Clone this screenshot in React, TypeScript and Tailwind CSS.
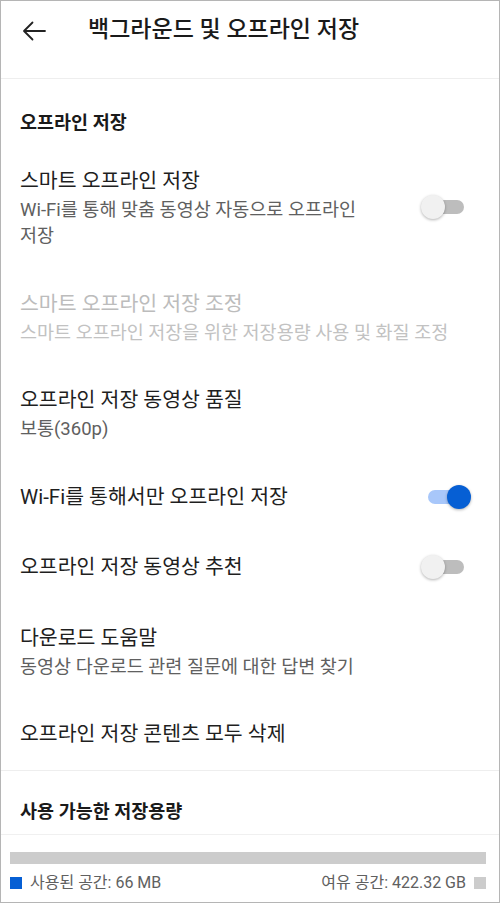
import React from 'react';

const font = { fontFamily: '"Roboto", "Noto Sans CJK KR", sans-serif' };

const Toggle = ({ on }: { on: boolean }) => (
  <div className="relative w-[50px] h-[24px] shrink-0">
    <div
      className={`absolute left-[7px] right-[7px] top-[5px] h-[14px] rounded-full ${
        on ? 'bg-[#a8c7fa]' : 'bg-[#bdbdbd]'
      }`}
    />
    <div
      className={`absolute top-0 w-[24px] h-[24px] rounded-full shadow-[0_1px_3px_rgba(0,0,0,0.3)] ${
        on ? 'right-0 bg-[#065fd4]' : 'left-0 bg-[#f1f1f1]'
      }`}
    />
  </div>
);

interface RowProps {
  title: string;
  subtitle?: string;
  disabled?: boolean;
  toggle?: boolean;
}

const Row = ({ title, subtitle, disabled, toggle }: RowProps) => (
  <div className="flex items-center gap-10 pl-[19px] pr-[28px] py-[19.25px]">
    <div className="flex-1 min-w-0 break-keep">
      <div
        className={`text-[20.5px] leading-[32px] ${disabled ? 'text-[#bcbcbc]' : 'text-[#1f1f1f]'}`}
      >
        {title}
      </div>
      {subtitle && (
        <div
          className={`text-[18.5px] leading-[26px] ${disabled ? 'text-[#c2c2c2]' : 'text-[#606060]'}`}
        >
          {subtitle}
        </div>
      )}
    </div>
    {toggle !== undefined && <Toggle on={toggle} />}
  </div>
);

export default function App() {
  return (
    <div
      className="w-[500px] h-[903px] box-border border border-[#b5b5b5] bg-white overflow-hidden"
      style={font}
    >
      <div className="h-[78px] border-b border-[#eeeeee]">
        <div className="h-[59px] flex items-center">
          <div className="w-[87px] pl-[21px] flex items-center">
            <svg width="24" height="20" viewBox="0 0 24 20" fill="none">
              <path
                d="M23 10H2.5M10.5 1.5 2 10l8.5 8.5"
                stroke="#222"
                strokeWidth="1.8"
                strokeLinecap="round"
                strokeLinejoin="round"
              />
            </svg>
          </div>
          <div className="text-[23px] font-medium text-[#1a1a1a]">백그라운드 및 오프라인 저장</div>
        </div>
      </div>

      <div className="pl-[19px] pt-[32px] pb-[11px] text-[18.5px] leading-[24px] font-bold text-[#1a1a1a]">
        오프라인 저장
      </div>

      <Row title="스마트 오프라인 저장" subtitle="Wi-Fi를 통해 맞춤 동영상 자동으로 오프라인 저장" toggle={false} />
      <Row
        title="스마트 오프라인 저장 조정"
        subtitle="스마트 오프라인 저장을 위한 저장용량 사용 및 화질 조정"
        disabled
      />
      <Row title="오프라인 저장 동영상 품질" subtitle="보통(360p)" />
      <Row title="Wi-Fi를 통해서만 오프라인 저장" toggle={true} />
      <Row title="오프라인 저장 동영상 추천" toggle={false} />
      <Row title="다운로드 도움말" subtitle="동영상 다운로드 관련 질문에 대한 답변 찾기" />
      <Row title="오프라인 저장 콘텐츠 모두 삭제" />

      <div className="border-t border-[#eeeeee]">
        <div className="pl-[19px] pt-[29px] pb-[10px] text-[18.5px] leading-[24px] font-bold text-[#1a1a1a] border-b border-[#f0f0f0]">
          사용 가능한 저장용량
        </div>
        <div className="pl-[9px] pr-[13px] pt-[17px]">
          <div className="h-[12px] bg-[#cccccc]">
            <div className="h-full bg-[#065fd4]" style={{ width: `${(66 / (422.32 * 1024)) * 100}%` }} />
          </div>
          <div className="mt-[9px] flex items-center justify-between text-[16px] leading-[20px] text-[#606060]">
            <div className="flex items-center gap-2">
              <span className="w-[12px] h-[12px] bg-[#065fd4]" />
              <span>사용된 공간: 66 MB</span>
            </div>
            <div className="flex items-center gap-2">
              <span>여유 공간: 422.32 GB</span>
              <span className="w-[12px] h-[12px] bg-[#cccccc]" />
            </div>
          </div>
        </div>
      </div>
    </div>
  );
}
